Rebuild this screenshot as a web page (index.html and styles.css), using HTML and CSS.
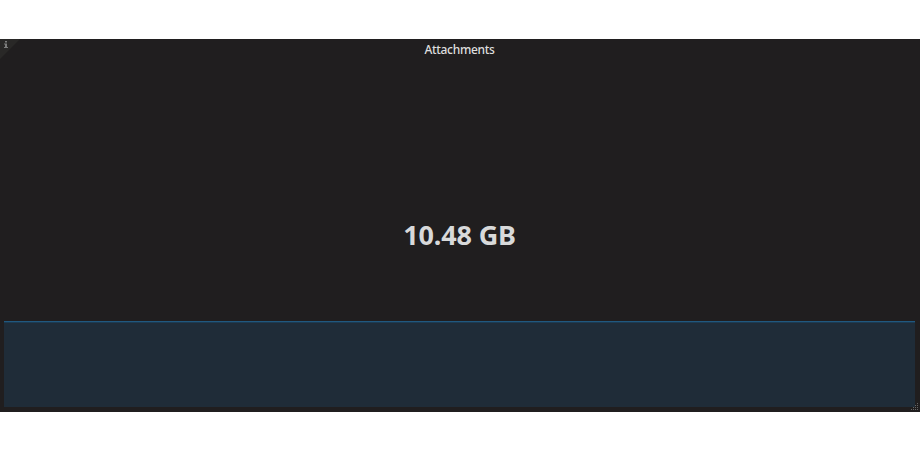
FILE: index.html
```html
<!DOCTYPE html>
<html lang="en">
<head>
<meta charset="utf-8">
<title>Attachments</title>
<link rel="stylesheet" href="styles.css">
</head>
<body>
<section class="panel">
  <div class="corner"></div>
  <svg class="info" viewBox="0 0 4 7"><path d="M1 0h2v1.5h-2zM0 2.5h3v3.5h1v1h-4v-1h1v-2.5h-1z"/></svg>
  <h2 class="title">Attachments</h2>
  <div class="value">10.48 GB</div>
  <div class="spark"></div>
  <svg class="resize" viewBox="0 0 8 8"><path d="M6 0h1v1h-1zM4 2h1v1h-1zM6 2h1v1h-1zM2 4h1v1h-1zM4 4h1v1h-1zM6 4h1v1h-1zM0 6h1v1h-1zM2 6h1v1h-1zM4 6h1v1h-1zM6 6h1v1h-1z"/></svg>
</section>
</body>
</html>
```
FILE: styles.css
```css
body { margin: 0; background: #fff; font-family: "Noto Sans", sans-serif; }
.panel { position: relative; box-sizing: border-box; height: 373px; margin-top: 39px; padding: 0 5px 5px 4px; background: #201e1f; display: flex; flex-direction: column; overflow: hidden; }
.corner { position: absolute; left: 0; top: 0; width: 20px; height: 20px; background: #292827; clip-path: polygon(0 0, 100% 0, 0 100%); }
.info { position: absolute; left: 4px; top: 2px; width: 4px; height: 7px; fill: #7c7c7c; }
.title { margin: 0; padding-top: 1px; height: 20px; font-size: 12px; line-height: 20px; font-weight: 500; letter-spacing: -0.3px; text-align: center; color: #dedede; }
.value { flex: 1; display: flex; align-items: center; justify-content: center; padding-top: 88px; font-size: 27px; line-height: 38px; font-weight: 700; letter-spacing: -0.15px; color: #d8d9da; }
.spark { height: 86px; box-sizing: border-box; border-top: 1px solid #20587f; background: linear-gradient(#1c3b52 0 1px, #1f2c38 1px); }
.resize { position: absolute; right: 1px; bottom: 1px; width: 8px; height: 8px; fill: #666; }
```
